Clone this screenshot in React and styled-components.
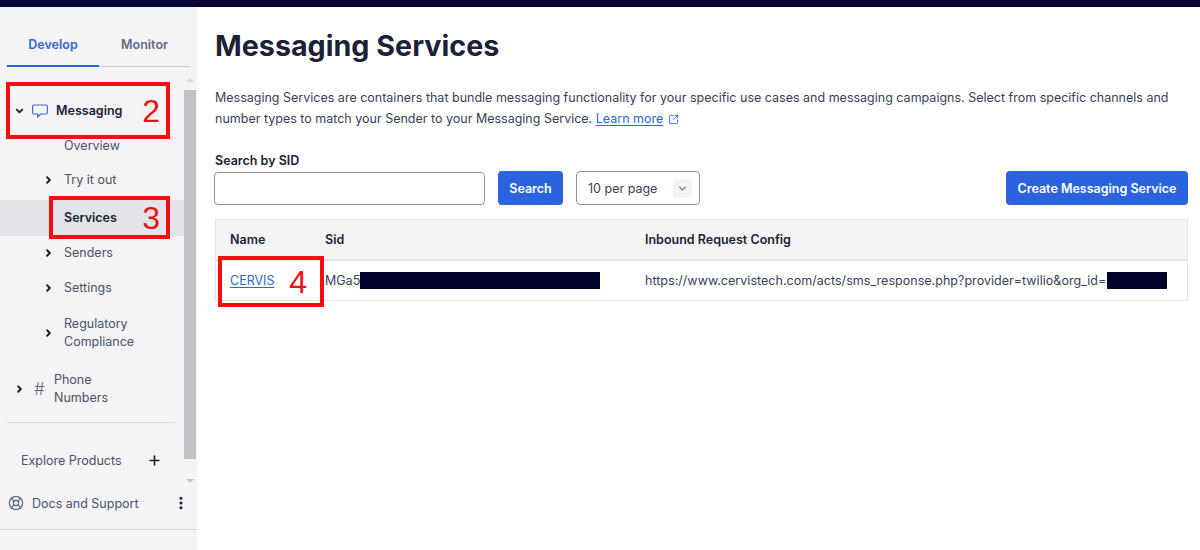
import React from 'react';
import styled, { createGlobalStyle } from 'styled-components';
import { ChevronDown, ChevronRight, Plus, LifeBuoy, MoreVertical, SquareArrowOutUpRight } from 'lucide-react';

const Global = createGlobalStyle`
  html, body { margin: 0; padding: 0; background: #fff; }
  body { font-family: Inter, "Liberation Sans", sans-serif; color: #121c2d; overflow: hidden; }
  * { box-sizing: border-box; }
`;
const Page = styled.div`position: relative; width: 1200px; height: 550px; overflow: hidden; display: flex; flex-direction: column;`;
const TopBar = styled.div`height: 7px; background: #06033a; flex: none;`;
const Body = styled.div`display: flex; flex: 1; min-height: 0;`;
const Sidebar = styled.aside`width: 197px; flex: none; background: #f4f4f6; display: flex; flex-direction: column;`;
const Tabs = styled.div`display: flex; margin: 0 7px 0 7px; height: 60px; border-bottom: 1px solid #cacdd8; flex: none;`;
const Tab = styled.div`
  width: ${p => p.$w}px; display: flex; align-items: center; justify-content: center; padding-top: 16px;
  font-size: 12.5px; font-weight: 600; color: ${p => p.$active ? '#2f64d8' : '#606b85'};
  border-bottom: ${p => p.$active ? '2px solid #2f64d8' : 'none'}; height: ${p => p.$active ? 60 : 59}px;
`;
const Split = styled.div`display: flex; flex: none; height: 363px; position: relative;`;
const Nav = styled.nav`width: 184px; flex: none; padding-top: 25px;`;
const Row = styled.div`
  display: flex; align-items: center; height: ${p => p.$h || 35}px; padding-left: ${p => p.$pad || 64}px; position: relative;
  margin-top: ${p => p.$mt || 0}px;
  font-size: 12.5px; line-height: 18px; font-weight: ${p => p.$bold ? 600 : 400};
  color: ${p => p.$bold ? '#1a2238' : '#4a5268'};
  background: ${p => p.$selected ? '#e3e4ea' : 'transparent'};
`;
const Caret = styled.span`position: absolute; left: ${p => p.$left}px; top: 50%; transform: translateY(-50%); display: flex; color: #121c2d;`;
const RowIcon = styled.span`position: absolute; left: ${p => p.$left}px; top: 50%; transform: translateY(-50%); display: flex; color: ${p => p.$c || '#606b85'}; font-size: 17px; font-weight: 300;`;
const Track = styled.div`width: 12px; flex: none; margin-top: 7px; display: flex; flex-direction: column; align-items: center;`;
const ArrowUp = styled.div`width: 0; height: 0; border-left: 4px solid transparent; border-right: 4px solid transparent; border-bottom: 4px solid #d6d7dc; margin: 4px 0 8px; flex: none;`;
const Thumb = styled.div`width: 12px; height: 369px; background: #c1c2c6; flex: none;`;
const ArrowDown = styled.div`width: 0; height: 0; border-left: 4px solid transparent; border-right: 4px solid transparent; border-top: 4px solid #c4c5ca; margin-top: 20px; flex: none;`;
const Divider = styled.div`position: absolute; left: 7px; width: 168px; top: 355px; height: 1px; background: #d5d6dc;`;
const Explore = styled.div`display: flex; align-items: center; justify-content: space-between; height: 20px; margin: 20px 0 0 21px; width: 141px; font-size: 12.5px; color: #4a5268; flex: none;`;
const Docs = styled.div`display: flex; align-items: center; height: 20px; margin: 23px 0 0 8px; width: 181px; font-size: 12.5px; color: #4a5268; gap: 8px; flex: none;`;
const DocsLabel = styled.span`flex: 1;`;
const SideFoot = styled.div`border-top: 1px solid #d5d6dc; margin-top: 16px; flex: none;`;
const Main = styled.main`flex: 1; padding: 20px 12px 0 18px; min-width: 0;`;
const Title = styled.h1`margin: 0; font-size: 28.7px; line-height: 38px; font-weight: 700; color: #1a2238;`;
const Intro = styled.p`margin: 22px 0 0; font-size: 12.5px; line-height: 21px; color: #39415a; width: 970px;`;
const Link = styled.a`color: #2f64d8; text-decoration: underline; text-underline-offset: 2px;`;
const ExternalIcon = styled(SquareArrowOutUpRight)`vertical-align: -2px; margin-left: 1px;`;
const SearchLabel = styled.div`margin-top: 24px; font-size: 12.5px; line-height: 16px; font-weight: 600; color: #1a2238;`;
const Controls = styled.div`display: flex; align-items: center; margin: 2px 0 0 -1px; gap: 13px;`;
const Input = styled.input`width: 271px; height: 33px; border: 1px solid #8891aa; border-radius: 4px; background: #fff;`;
const Button = styled.button`
  height: 34px; border: none; border-radius: 4px; background: #2b63de; color: #fff; font: 600 12.5px Inter, sans-serif;
  width: ${p => p.$w}px; margin-left: ${p => p.$auto ? 'auto' : '0'}; padding: 0;
`;
const Select = styled.div`width: 124px; height: 34px; border: 1px solid #8891aa; border-radius: 4px; display: flex; align-items: center; justify-content: space-between; padding: 0 7px 0 11px; font-size: 12.5px; color: #39415a;`;
const SelectCaret = styled.span`width: 19px; height: 19px; border-radius: 3px; background: #f4f4f6; display: flex; align-items: center; justify-content: center; color: #606b85;`;
const Table = styled.div`margin-top: 14px; width: 973px; border: 1px solid #e1e3ea; border-top-color: #e8e9ee;`;
const TRow = styled.div`
  display: grid; grid-template-columns: 95px 320px 1fr; align-items: center; padding-left: 14px;
  height: ${p => p.$head ? 41 : 39}px; font-size: 12.5px;
  background: ${p => p.$head ? '#f4f4f6' : '#fff'}; font-weight: ${p => p.$head ? 600 : 400};
  color: ${p => p.$head ? '#1a2238' : '#39415a'};
  border-bottom: ${p => p.$head ? '2px solid #e1e3ea' : 'none'};
`;
const Cell = styled.div`display: flex; align-items: center; white-space: nowrap;`;
const UrlText = styled.span`letter-spacing: 0.03px;`;
const Redacted = styled.span`display: inline-block; width: ${p => p.$w}px; height: 17px; background: #02012a; margin-left: ${p => p.$ml || 0}px;`;
const Mark = styled.div`
  position: absolute; left: ${p => p.$x}px; top: ${p => p.$y}px; width: ${p => p.$w}px; height: ${p => p.$h}px;
  border: 4px solid #f60d0d; pointer-events: none;
`;
const Num = styled.span`
  position: absolute; right: ${p => p.$r}px; top: 50%; transform: translateY(-50%);
  font: 400 32px/1 "Liberation Sans", sans-serif; color: #ee1010;
`;

const C = ({ left = 43 }) => <Caret $left={left}><ChevronRight size={11} strokeWidth={4} /></Caret>;

const Bubble = () => (
  <svg width="16" height="14" viewBox="0 0 16 14" fill="none" stroke="currentColor" strokeWidth="1.1" strokeLinejoin="round">
    <path d="M2 1h12a1.4 1.4 0 0 1 1.4 1.4v6.2A1.4 1.4 0 0 1 14 10H8.6L5.6 13v-3H2A1.4 1.4 0 0 1 .6 8.6V2.4A1.4 1.4 0 0 1 2 1z" />
  </svg>
);

export default function App() {
  return (
    <Page>
      <Global />
      <TopBar />
      <Body>
        <Sidebar>
          <Tabs>
            <Tab $active $w={92}>Develop</Tab>
            <Tab $w={91}>Monitor</Tab>
          </Tabs>
          <Split>
            <Nav>
              <Row $h={37} $pad={56} $bold>
                <Caret $left={14}><ChevronDown size={11} strokeWidth={4} /></Caret>
                <RowIcon $left={32} $c="#2f64d8"><Bubble /></RowIcon>
                Messaging
              </Row>
              <Row $h={33}>Overview</Row>
              <Row $h={36}><C />Try it out</Row>
              <Row $h={36} $mt={2} $bold $selected>Services</Row>
              <Row $h={33}><C />Senders</Row>
              <Row $h={37}><C />Settings</Row>
              <Row $h={53}><C /><span>Regulatory<br />Compliance</span></Row>
              <Row $h={59} $pad={54}>
                <C left={14} />
                <RowIcon $left={34}>#</RowIcon>
                <span>Phone<br />Numbers</span>
              </Row>
            </Nav>
            <Track>
              <ArrowUp />
              <Thumb />
              <ArrowDown />
            </Track>
            <Divider />
          </Split>
          <Explore>Explore Products <Plus size={15} strokeWidth={2.6} color="#121c2d" /></Explore>
          <Docs>
            <LifeBuoy size={16} strokeWidth={2} color="#606b85" />
            <DocsLabel>Docs and Support</DocsLabel>
            <MoreVertical size={16} strokeWidth={2.6} color="#121c2d" />
          </Docs>
          <SideFoot />
        </Sidebar>
        <Main>
          <Title>Messaging Services</Title>
          <Intro>
            Messaging Services are containers that bundle messaging functionality for your specific use cases and messaging campaigns. Select from specific channels and number types to match your Sender to your Messaging Service. <Link>Learn more</Link>{' '}
            <ExternalIcon size={11} color="#2f64d8" />
          </Intro>
          <SearchLabel>Search by SID</SearchLabel>
          <Controls>
            <Input />
            <Button $w={65}>Search</Button>
            <Select>10 per page <SelectCaret><ChevronDown size={11} strokeWidth={2.6} /></SelectCaret></Select>
            <Button $w={182} $auto>Create Messaging Service</Button>
          </Controls>
          <Table>
            <TRow $head><Cell>Name</Cell><Cell>Sid</Cell><Cell>Inbound Request Config</Cell></TRow>
            <TRow>
              <Cell><Link>CERVIS</Link></Cell>
              <Cell>MGa5<Redacted $w={240} /></Cell>
              <Cell><UrlText>https://www.cervistech.com/acts/sms_response.php?provider=twilio&amp;org_id=</UrlText><Redacted $w={60} $ml={1} /></Cell>
            </TRow>
          </Table>
        </Main>
      </Body>
      <Mark $x={6} $y={82} $w={164} $h={57}><Num $r={6}>2</Num></Mark>
      <Mark $x={49} $y={196} $w={121} $h={43}><Num $r={6}>3</Num></Mark>
      <Mark $x={218} $y={256} $w={106} $h={51}><Num $r={13}>4</Num></Mark>
    </Page>
  );
}
